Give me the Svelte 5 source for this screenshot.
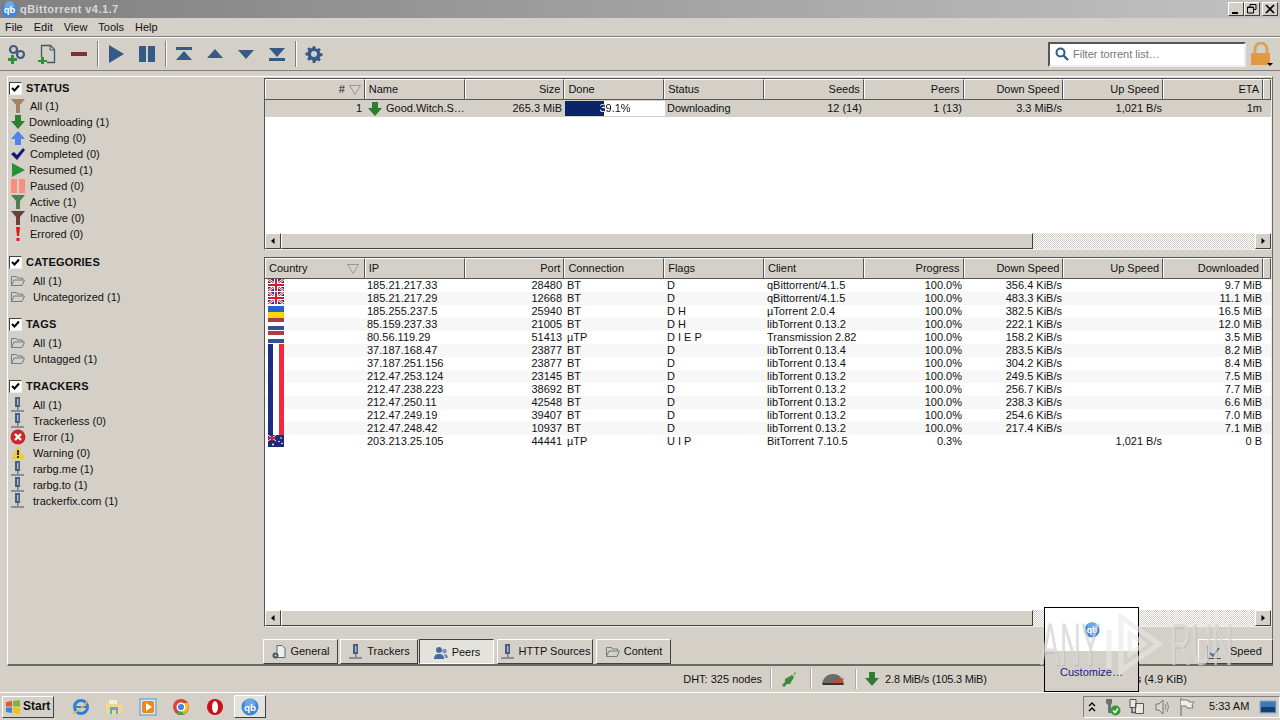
<script>
	const statusRows = [
		['funnel-brown', 'All (1)', 30],
		['down', 'Downloading (1)', 29],
		['up', 'Seeding (0)', 29],
		['check', 'Completed (0)', 30],
		['play-green', 'Resumed (1)', 29],
		['pause-pink', 'Paused (0)', 30],
		['funnel-green', 'Active (1)', 30],
		['funnel-dark', 'Inactive (0)', 30],
		['bang', 'Errored (0)', 30],
	]
	const sections = [
		{ title: 'CATEGORIES', rows: [['folder', 'All (1)', 33], ['folder', 'Uncategorized (1)', 33]] },
		{ title: 'TAGS', rows: [['folder', 'All (1)', 33], ['folder', 'Untagged (1)', 33]] },
		{
			title: 'TRACKERS',
			rows: [
				['tracker', 'All (1)', 33],
				['tracker', 'Trackerless (0)', 33],
				['error', 'Error (1)', 33],
				['warning', 'Warning (0)', 33],
				['tracker', 'rarbg.me (1)', 33],
				['tracker', 'rarbg.to (1)', 33],
				['tracker', 'trackerfix.com (1)', 33],
			],
		},
	]

	const torrentCols = [
		['#', 'r', true], ['Name', 'l'], ['Size', 'r'], ['Done', 'l'], ['Status', 'l'],
		['Seeds', 'r'], ['Peers', 'r'], ['Down Speed', 'r'], ['Up Speed', 'r'], ['ETA', 'r'],
	]
	const peerCols = [
		['Country', 'l', true], ['IP', 'l'], ['Port', 'r'], ['Connection', 'l'], ['Flags', 'l'],
		['Client', 'l'], ['Progress', 'r'], ['Down Speed', 'r'], ['Up Speed', 'r'], ['Downloaded', 'r'],
	]
	const peers = [
		['gb', '185.21.217.33', '28480', 'BT', 'D', 'qBittorrent/4.1.5', '100.0%', '356.4 KiB/s', '', '9.7 MiB'],
		['gb', '185.21.217.29', '12668', 'BT', 'D', 'qBittorrent/4.1.5', '100.0%', '483.3 KiB/s', '', '11.1 MiB'],
		['ua', '185.255.237.5', '25940', 'BT', 'D H', 'µTorrent 2.0.4', '100.0%', '382.5 KiB/s', '', '16.5 MiB'],
		['nl', '85.159.237.33', '21005', 'BT', 'D H', 'libTorrent 0.13.2', '100.0%', '222.1 KiB/s', '', '12.0 MiB'],
		['nl', '80.56.119.29', '51413', 'µTP', 'D I E P', 'Transmission 2.82', '100.0%', '158.2 KiB/s', '', '3.5 MiB'],
		['fr', '37.187.168.47', '23877', 'BT', 'D', 'libTorrent 0.13.4', '100.0%', '283.5 KiB/s', '', '8.2 MiB'],
		['fr', '37.187.251.156', '23877', 'BT', 'D', 'libTorrent 0.13.4', '100.0%', '304.2 KiB/s', '', '8.4 MiB'],
		['fr', '212.47.253.124', '23145', 'BT', 'D', 'libTorrent 0.13.2', '100.0%', '249.5 KiB/s', '', '7.5 MiB'],
		['fr', '212.47.238.223', '38692', 'BT', 'D', 'libTorrent 0.13.2', '100.0%', '256.7 KiB/s', '', '7.7 MiB'],
		['fr', '212.47.250.11', '42548', 'BT', 'D', 'libTorrent 0.13.2', '100.0%', '238.3 KiB/s', '', '6.6 MiB'],
		['fr', '212.47.249.19', '39407', 'BT', 'D', 'libTorrent 0.13.2', '100.0%', '254.6 KiB/s', '', '7.0 MiB'],
		['fr', '212.47.248.42', '10937', 'BT', 'D', 'libTorrent 0.13.2', '100.0%', '217.4 KiB/s', '', '7.1 MiB'],
		['au', '203.213.25.105', '44441', 'µTP', 'U I P', 'BitTorrent 7.10.5', '0.3%', '', '1,021 B/s', '0 B'],
	]
	const rightCols = [2, 6, 7, 8, 9]
	const tabs = [
		['file', 'General', 75, 2],
		['tracker', 'Trackers', 78, 1],
		['people', 'Peers', 75, 3],
		['globe', 'HTTP Sources', 96, 3],
		['folder', 'Content', 75, 0],
	]
</script>

{#snippet icon(name)}
	<svg class="ico" viewBox="0 0 16 16" width="16" height="16">
		{#if name === 'funnel-brown' || name === 'funnel-green' || name === 'funnel-dark'}
			{@const c = name === 'funnel-brown' ? '#a08468' : name === 'funnel-green' ? '#4f7f4f' : '#6b3f3a'}
			<path d="M1 1h14l-5 6v8H6V7z" fill={c} />
		{:else if name === 'down'}
			<path d="M5 1h6v6h4l-7 8-7-8h4z" fill="#2e7d32" />
		{:else if name === 'up'}
			<path d="M5 15h6V9h4L8 1 1 9h4z" fill="#4d86e8" />
		{:else if name === 'check'}
			<path d="M1 8l3-2 3 3 6-7 2 2-8 10z" fill="#16167a" />
		{:else if name === 'play-green'}
			<path d="M2 1l13 7-13 7z" fill="#2a9133" />
		{:else if name === 'pause-pink'}
			<path d="M1 1h6v14H1zM9 1h6v14H9z" fill="#f98d80" />
		{:else if name === 'bang'}
			<path d="M6 1h4l-1 9H7zM6.500 12h3v3h-3z" fill="#ee1111" />
		{:else if name === 'folder'}
			<path d="M1.500 12.500V3.500h5l1 1.500h5v2M1.500 12.500l2.500-5.500h10.500l-2.500 5.500z" fill="none" stroke="#6f7f85" />
		{:else if name === 'tracker'}
			<path d="M5 0h5v10H5z" fill="#4a5f85" /><path d="M7 2h1.500v6H7z" fill="#a9b6c8" /><path d="M7 10h1.500v3H7z" fill="#7a7a7a" /><path d="M1 13h13v2H1z" fill="#8a8f98" />
		{:else if name === 'error'}
			<circle cx="8" cy="8" r="7.500" fill="#c9282d" /><path d="M5 5l6 6M11 5l-6 6" stroke="#fff" stroke-width="2.400" />
		{:else if name === 'warning'}
			<path d="M8 1l7 13H1z" fill="#f3c93c" /><path d="M7 5h2v5H7zM7 11h2v2H7z" fill="#333" />
		{:else if name === 'file'}
			<path d="M6 1.500h5l3 3v9H6z" fill="#eee" stroke="#5a6b78" /><circle cx="4.500" cy="11.500" r="3" fill="#4a5a68" /><circle cx="4.500" cy="11.500" r="1" fill="#d4d0c8" />
		{:else if name === 'people'}
			<circle cx="6" cy="5" r="3" fill="#4a6a96" /><path d="M1 14c0-4 2-5 5-5s5 1 5 5z" fill="#4a6a96" /><circle cx="11.500" cy="6" r="2.200" fill="#7b8fae" /><path d="M11 9c2.500 0 4 1 4 4h-3z" fill="#7b8fae" />
		{:else if name === 'globe'}
			<path d="M5 0h5v10H5z" fill="#4a5f85" /><path d="M7 2h1.500v6H7z" fill="#a9b6c8" /><path d="M7 10h1.500v3H7z" fill="#7a7a7a" /><path d="M1 13h13v2H1z" fill="#8a8f98" />
		{/if}
	</svg>
{/snippet}

{#snippet flag(code)}
	<svg class="flag" viewBox="0 0 16 13" width="16" height="13" preserveAspectRatio="none">
		{#if code === 'gb'}
			<rect width="16" height="12" fill="#27347f" />
			<path d="M0 0l16 12M16 0L0 12" stroke="#fff" stroke-width="2.500" />
			<path d="M0 0l16 12M16 0L0 12" stroke="#d22" stroke-width="1" />
			<path d="M8 0v12M0 6h16" stroke="#fff" stroke-width="4" />
			<path d="M8 0v12M0 6h16" stroke="#d8182c" stroke-width="2" />
		{:else if code === 'ua'}
			<rect width="16" height="6" y="1" fill="#1e66cc" /><rect width="16" height="6" y="7" fill="#ffd60a" />
		{:else if code === 'nl'}
			<rect width="16" height="4" fill="#ae3b45" /><rect width="16" height="4" y="4" fill="#fff" /><rect width="16" height="4" y="8" fill="#34528f" />
		{:else if code === 'fr'}
			<rect width="5" height="13" fill="#1b2f7d" /><rect width="6" height="13" x="5" fill="#fff" /><rect width="5" height="13" x="11" fill="#ef2b3c" />
		{:else if code === 'au'}
			<rect width="16" height="12" fill="#1c2a78" /><path d="M0 0l8 6M8 0L0 6" stroke="#fff" /><path d="M4 0v6M0 3h8" stroke="#d8182c" stroke-width="1.500" /><circle cx="5" cy="9.500" r="1" fill="#fff" /><circle cx="13" cy="3" r=".8" fill="#fff" /><circle cx="14" cy="8.500" r=".8" fill="#fff" /><circle cx="11" cy="6.500" r=".8" fill="#fff" />
		{/if}
	</svg>
{/snippet}

{#snippet qblogo(size)}
	<svg viewBox="0 0 20 20" width={size} height={size}>
		<circle cx="10" cy="10" r="9.500" fill="#3f86d8" />
		<circle cx="10" cy="6" r="6" fill="#8dbcec" opacity=".6" />
		<text x="10" y="14" text-anchor="middle" class="qb-mark">qb</text>
	</svg>
{/snippet}

{#snippet scrollbar()}
	<div class="scrollbar">
		<div class="sb-btn"><svg viewBox="0 0 8 8" width="8" height="8"><path d="M5.500 1v6L2 4z" fill="#000" /></svg></div>
		<div class="sb-track"><div class="sb-thumb"></div></div>
		<div class="sb-btn"><svg viewBox="0 0 8 8" width="8" height="8"><path d="M2.500 1v6L6 4z" fill="#000" /></svg></div>
	</div>
{/snippet}

{#snippet header(cols)}
	<div class="thead">
		{#each cols as [label, align, sorted]}
			<div class="th" class:right={align === 'r'}>
				<span>{label}</span>
				{#if sorted}
					<svg class="sort" class:sort-l={align === 'l'} viewBox="0 0 12 10" width="12" height="10"><path d="M.500 .500h11L6 9.500z" fill="none" stroke="#9a968e" /></svg>
				{/if}
			</div>
		{/each}
		<div class="th th-tail"></div>
	</div>
{/snippet}

{#snippet checkbox()}
	<span class="cb"><svg viewBox="0 0 11 11" width="11" height="11"><path d="M2 5l2.500 2.500L9 2.500" fill="none" stroke="#000" stroke-width="2" /></svg></span>
{/snippet}

<div class="window">
	<div class="titlebar">
		<span class="title-logo">{@render qblogo(17)}</span>
		<span class="title-text">qBittorrent v4.1.7</span>
		<div class="win-btns">
			<button class="win-btn"><svg viewBox="0 0 10 10" width="10" height="10"><path d="M1 8h6v2H1z" fill="#000" /></svg></button>
			<button class="win-btn"><svg viewBox="0 0 10 10" width="10" height="10"><path d="M3 .500h6v5H7M3 .500v2M.500 3h6v6h-6zM.500 3.500h6" fill="none" stroke="#000" /></svg></button>
			<button class="win-btn close"><svg viewBox="0 0 10 10" width="10" height="10"><path d="M1 1l8 8M9 1L1 9" stroke="#000" stroke-width="1.600" /></svg></button>
		</div>
	</div>

	<nav class="menubar">
		<span>File</span><span>Edit</span><span>View</span><span>Tools</span><span>Help</span>
	</nav>

	<div class="toolbar">
		<div class="tool"><svg viewBox="0 0 20 20" width="20" height="20"><circle cx="6.500" cy="5.500" r="3.500" fill="none" stroke="#3d5a80" stroke-width="2.200" /><circle cx="13.500" cy="10.500" r="3.500" fill="none" stroke="#3d5a80" stroke-width="2.200" /><path d="M4 11h3v3h3v3H7v3H4v-3H1v-3h3z" fill="#2f8f3a" /></svg></div>
		<div class="tool"><svg viewBox="0 0 20 20" width="20" height="20"><path d="M3.500 13V1.500h9l4 4v13H9" fill="none" stroke="#3d5a68" stroke-width="1.300" /><path d="M12 2v4h4" fill="none" stroke="#3d5a68" /><path d="M3 13h3v3h3v2H6v2H3v-2H0v-2h3z" fill="#2f8f3a" /></svg></div>
		<div class="tool"><svg viewBox="0 0 20 20" width="20" height="20"><path d="M2 8h16v4H2z" fill="#7d2f3f" /></svg></div>
		<i class="tool-sep"></i>
		<div class="tool"><svg viewBox="0 0 20 20" width="20" height="20"><path d="M3 1l15 9-15 9z" fill="#345a87" /></svg></div>
		<div class="tool"><svg viewBox="0 0 20 20" width="20" height="20"><path d="M2 2h7v16H2zM11 2h7v16h-7z" fill="#345a87" /></svg></div>
		<i class="tool-sep"></i>
		<div class="tool"><svg viewBox="0 0 20 20" width="20" height="20"><path d="M2 3h16v3H2zM10 7l8 9H2z" fill="#345a87" /></svg></div>
		<div class="tool"><svg viewBox="0 0 20 20" width="20" height="20"><path d="M10 5l8 9H2z" fill="#345a87" /></svg></div>
		<div class="tool"><svg viewBox="0 0 20 20" width="20" height="20"><path d="M2 6h16l-8 9z" fill="#345a87" /></svg></div>
		<div class="tool"><svg viewBox="0 0 20 20" width="20" height="20"><path d="M2 4h16l-8 9zM2 14h16v3H2z" fill="#345a87" /></svg></div>
		<i class="tool-sep"></i>
		<div class="tool"><svg viewBox="0 0 20 20" width="20" height="20"><path d="M8.500 1h3l.5 2.500 1.700.7 2.200-1.400 2.100 2.100-1.400 2.200.7 1.700 2.700.5v3l-2.700.5-.7 1.700 1.400 2.200-2.100 2.100-2.200-1.400-1.700.7-.5 2.500h-3L8 17.300l-1.700-.7-2.200 1.400L2 15.900l1.400-2.200-.7-1.700L0 11.500v-3l2.700-.5.7-1.700L2 4.100 4.100 2l2.200 1.400L8 2.700z" transform="translate(1.500 1.500) scale(.85)" fill="#345a87" /><circle cx="10" cy="10" r="3" fill="#d4d0c8" /></svg></div>

		<div class="filter">
			<svg viewBox="0 0 14 14" width="14" height="14"><circle cx="5.500" cy="5.500" r="4" fill="none" stroke="#345a87" stroke-width="2" /><path d="M8.500 8.500l4.500 4.500" stroke="#345a87" stroke-width="2.400" /></svg>
			<span>Filter torrent list…</span>
		</div>
		<div class="lock">
			<svg viewBox="0 0 24 24" width="24" height="24"><path d="M6 11V7a6 6 0 0 1 12 0v4" fill="none" stroke="#d6a35c" stroke-width="3" /><path d="M2 11h19v12H2z" fill="#e39a3e" /><path d="M18 21h6l-3 3z" fill="#000" /></svg>
		</div>
	</div>

	<div class="main">
		<div class="frame">
			<aside class="sidebar">
				<section class="group">
					<div class="group-head">{@render checkbox()}<b>STATUS</b></div>
					{#each statusRows as [ic, label, x]}
						<div class="side-row">{@render icon(ic)}<span style="left:{x}px" class="side-label">{label}</span></div>
					{/each}
				</section>
				{#each sections as s}
					<section class="group">
						<div class="group-head">{@render checkbox()}<b>{s.title}</b></div>
						{#each s.rows as [ic, label, x]}
							<div class="side-row">{@render icon(ic)}<span style="left:{x}px" class="side-label">{label}</span></div>
						{/each}
					</section>
				{/each}
			</aside>

			<div class="content">
				<div class="panel torrents">
					{@render header(torrentCols)}
					<div class="rows">
						<div class="tr selected">
							<div class="td right">1</div>
							<div class="td name">{@render icon('down')}<span>Good.Witch.S…</span></div>
							<div class="td right">265.3 MiB</div>
							<div class="td progress">
								<div class="progress-fill" style="width:39.1%"></div>
								<span class="progress-text" style="--done:39.1%">39.1%</span>
							</div>
							<div class="td">Downloading</div>
							<div class="td right">12 (14)</div>
							<div class="td right">1 (13)</div>
							<div class="td right">3.3 MiB/s</div>
							<div class="td right">1,021 B/s</div>
							<div class="td right">1m</div>
						</div>
					</div>
					{@render scrollbar()}
				</div>

				<div class="panel peers">
					{@render header(peerCols)}
					<div class="rows">
						{#each peers as p, i}
							<div class="tr peer" class:alt={i % 2 === 1}>
								<div class="td flagcell">{@render flag(p[0])}</div>
								{#each p.slice(1) as v, j}
									<div class="td" class:right={rightCols.includes(j + 1)}>{v}</div>
								{/each}
							</div>
						{/each}
					</div>
					{@render scrollbar()}
				</div>

				<div class="tabs">
					{#each tabs as [ic, label, w, gap], i}
						<div class="tab" class:active={i === 2} style="width:{w}px;margin-right:{gap}px">{@render icon(ic)}<span>{label}</span></div>
					{/each}
					<div class="tab speed">
						<svg class="ico" viewBox="0 0 16 16" width="16" height="16"><path d="M1.500 1v13.500H15" fill="none" stroke="#555" /><path d="M4 9l3 3 6-8" fill="none" stroke="#4a6a96" stroke-width="1.800" /></svg>
						<span>Speed</span>
					</div>
				</div>
			</div>
		</div>
	</div>

	<div class="statusbar">
		<span>DHT: 325 nodes</span>
		<i class="st-sep"></i>
		<svg class="st-ico" viewBox="0 0 16 16" width="16" height="16"><path d="M14 1l1 1-3 3 1 1-4 7-3 0-3 3-2-2 3-3 0-3 7-4 1 1z" fill="#3f8a3a" /></svg>
		<i class="st-sep"></i>
		<svg class="st-ico speedo" viewBox="0 0 24 14" width="24" height="14"><path d="M1 13a11 11 0 0 1 22 0z" fill="#6f6a66" /><path d="M11 11L23 6l-3 6z" fill="#d8481e" /><path d="M2 11h20v2H2z" fill="#333" /></svg>
		<i class="st-sep"></i>
		<svg class="st-ico dl-ico" viewBox="0 0 16 16" width="16" height="16"><path d="M5 1h6v6h4l-7 8-7-8h4z" fill="#2e7d32" /></svg>
		<span class="dl">2.8 MiB/s (105.3 MiB)</span>
		<i class="st-sep"></i>
		<svg class="st-ico" viewBox="0 0 16 16" width="16" height="16"><path d="M5 15h6V9h4L8 1 1 9h4z" fill="#2e7d32" /></svg>
		<span class="ul">1,021 B/s (4.9 KiB)</span>
	</div>

	<div class="taskbar">
		<div class="start">
			<svg viewBox="0 0 16 16" width="16" height="16"><path d="M1 3l6-1v5.500H1z" fill="#e4572e" /><path d="M8 2l7-1v6.500H8z" fill="#7cb342" /><path d="M1 8.500h6V14l-6-1z" fill="#3a86d8" /><path d="M8 8.500h7V15l-7-1z" fill="#f4c20d" /></svg>
			<b>Start</b>
		</div>
		<div class="quick">
			<span class="q"><svg viewBox="0 0 18 18" width="18" height="18"><circle cx="9" cy="9" r="6.500" fill="none" stroke="#2f7fd8" stroke-width="3" /><path d="M3 9h12" stroke="#2f7fd8" stroke-width="2" /><path d="M1 15C4 15 14 7 16 2" fill="none" stroke="#e9b949" stroke-width="1.600" /></svg></span>
			<span class="q"><svg viewBox="0 0 18 18" width="18" height="18"><path d="M1 5h6l1 1.500h9V16H1z" fill="#f1d98a" /><path d="M4 2h8v4H4z" fill="#f7f0d0" /><path d="M5 9h8v7h-2v-4H7v4H5z" fill="#5fa5d8" /></svg></span>
			<span class="q"><svg viewBox="0 0 18 18" width="18" height="18"><rect x="1" y="1" width="16" height="16" fill="#d7e6f5" stroke="#5a92cc" /><rect x="3" y="3" width="12" height="12" rx="2" fill="#e98b1c" /><path d="M7 5l6 4-6 4z" fill="#fff" /></svg></span>
			<span class="q"><svg viewBox="0 0 18 18" width="18" height="18"><circle cx="9" cy="9" r="8" fill="#dc4437" /><path d="M9 9L16 13A8 8 0 0 1 5 16z" fill="#3aa757" /><path d="M9 5h7a8 8 0 0 1-5 11z" fill="#f4c20d" /><circle cx="9" cy="9" r="3.800" fill="#4a86e8" stroke="#fff" stroke-width="1.400" /></svg></span>
			<span class="q"><svg viewBox="0 0 18 18" width="18" height="18"><ellipse cx="9" cy="9" rx="8" ry="8" fill="#cc0f16" /><ellipse cx="9" cy="9" rx="3" ry="6" fill="#fff" /></svg></span>
		</div>
		<div class="task-btn">{@render qblogo(18)}</div>
		<div class="tray">
			<svg class="tray-arrow" viewBox="0 0 8 10" width="8" height="10"><path d="M1 4l3-3 3 3M1 9l3-3 3 3" fill="none" stroke="#000" stroke-width="1.300" /></svg>
			<svg viewBox="0 0 18 18" width="18" height="18"><path d="M3 1h6v4l-1 2v8H5V7L3 5z" fill="#6a7078" /><circle cx="12.500" cy="12.500" r="5" fill="#2f9b35" /><path d="M10 12.500l2 2 3-4" fill="none" stroke="#fff" stroke-width="1.500" /></svg>
			<svg viewBox="0 0 18 18" width="18" height="18"><path d="M2 1.500h6v8H2zM7.500 5.500h8v10h-8z" fill="#e8e8e0" stroke="#555" /><path d="M4 9.500v5h4" fill="none" stroke="#555" stroke-width="1.500" /></svg>
			<svg viewBox="0 0 18 18" width="18" height="18"><path d="M3 6h3l4-4v14l-4-4H3z" fill="#d8d8d0" stroke="#777" /><path d="M12 6q2 3 0 6M14 4q3 5 0 10" fill="none" stroke="#888" /></svg>
			<svg viewBox="0 0 18 18" width="18" height="18"><path d="M3 0v18" stroke="#666" /><path d="M3 2h7l1 2h5l-2 3 1 3H9L8 8H3" fill="#eee" stroke="#777" /></svg>
			<span class="clock">5:33 AM</span>
			<svg viewBox="0 0 18 18" width="18" height="18"><path d="M1 3h16v12H1z" fill="#3d79b8" stroke="#8ab" /><path d="M2 9h14v5H2z" fill="#15406e" /></svg>
		</div>
	</div>

	<div class="popup">
		<div class="popup-top">{@render qblogo(16)}</div>
		<div class="popup-bottom">Customize…</div>
	</div>
	<div class="watermark" aria-hidden="true">
		<span class="wm-word">ANY</span>
		<svg class="wm-mark" viewBox="0 0 60 64" width="60" height="64"><path d="M3 18v38M15 5v54l38-27z M24 22v20l14-10z" fill="none" stroke="currentColor" stroke-width="5" /></svg>
		<span class="wm-word">RUN</span>
	</div>
</div>

<style>
	:global(body) {
		margin: 0;
		background: #d4d0c8;
		overflow: hidden;
	}
	.window {
		width: 1280px;
		height: 720px;
		display: flex;
		flex-direction: column;
		position: relative;
		overflow: hidden;
		background: #d4d0c8;
		color: #111;
		font: 11px/13px Tahoma, "Liberation Sans", "Noto Sans", sans-serif;
	}

	.titlebar {
		height: 18px;
		display: flex;
		align-items: center;
		background: linear-gradient(90deg, #808080, #c2c2c2);
		flex: none;
	}
	.title-logo {
		display: flex;
		margin-left: 1px;
	}
	.title-text {
		margin-left: 2px;
		font-weight: 700;
		letter-spacing: .45px;
		color: #d8d8d8;
	}
	.qb-mark {
		font: 700 11px "Liberation Sans", sans-serif;
		fill: #fff;
	}
	.win-btns {
		margin-left: auto;
		display: flex;
		margin-right: 2px;
	}
	.win-btn {
		width: 16px;
		height: 14px;
		padding: 0;
		margin: 0;
		display: flex;
		align-items: center;
		justify-content: center;
		background: #d4d0c8;
		border: 1px solid;
		border-color: #fff #404040 #404040 #fff;
		box-sizing: border-box;
	}
	.win-btn.close {
		margin-left: 2px;
	}

	.menubar {
		height: 19px;
		display: flex;
		align-items: center;
		padding-left: 5px;
		gap: 11px;
		flex: none;
		box-sizing: border-box;
		border-bottom: 1px solid #808080;
	}

	.toolbar {
		height: 34px;
		display: flex;
		align-items: center;
		flex: none;
		padding: 0 2px 0 1px;
		box-sizing: border-box;
		border-top: 1px solid #fff;
		border-bottom: 1px solid #808080;
	}
	.tool {
		width: 31px;
		height: 24px;
		display: flex;
		align-items: center;
		justify-content: center;
	}
	.tool-sep {
		width: 1px;
		height: 26px;
		background: #808080;
		border-right: 1px solid #fff;
		margin: 0 1px 0 3px;
	}
	.filter {
		margin-left: auto;
		width: 198px;
		height: 25px;
		box-sizing: border-box;
		background: #fff;
		border: 2px solid;
		border-color: #555 #eee #eee #555;
		display: flex;
		align-items: center;
		gap: 4px;
		padding-left: 5px;
		color: #777;
	}
	.lock {
		width: 30px;
		margin-right: 2px;
		display: flex;
		justify-content: center;
	}

	.main {
		flex: 1;
		min-height: 0;
		padding: 5px 7px 0 7px;
		box-sizing: border-box;
		display: flex;
	}
	.frame {
		flex: 1;
		min-width: 0;
		display: flex;
		box-sizing: border-box;
		border: 1px solid;
		border-color: #fff #6a6a66 #6a6a66 #fff;
		border-bottom-width: 2px;
	}
	.sidebar {
		width: 256px;
		flex: none;
		padding-top: 1px;
	}
	.group {
		margin-bottom: 9px;
	}
	.group:first-child {
		margin-bottom: 10px;
	}
	.group + .group .group-head {
		margin-bottom: 1px;
	}
	.group-head {
		height: 20px;
		display: flex;
		align-items: center;
		padding-left: 1px;
		gap: 4px;
	}
	.group-head b {
		font-size: 11px;
		letter-spacing: .2px;
	}
	.cb {
		width: 11px;
		height: 11px;
		background: #fff;
		border: 1px solid;
		border-color: #444 #eee #eee #444;
		display: block;
	}
	.cb svg {
		display: block;
	}
	.side-row {
		height: 16px;
		position: relative;
		display: flex;
		align-items: center;
		padding-left: 2px;
	}
	.side-label {
		position: absolute;
		top: 2px;
		margin-left: -8px;
		white-space: nowrap;
	}
	.ico {
		display: block;
		flex: none;
	}

	.content {
		flex: 1;
		min-width: 0;
		display: flex;
		flex-direction: column;
	}
	.panel {
		background: #fff;
		border: 1px solid;
		border-color: #555 #eee #eee #555;
		display: flex;
		flex-direction: column;
		flex: none;
		box-sizing: border-box;
		width: 1008px;
		overflow: hidden;
	}
	.torrents {
		height: 172px;
		margin-top: 1px;
	}
	.peers {
		height: 370px;
		margin-top: 7px;
	}
	.thead {
		display: flex;
		height: 20px;
		flex: none;
		background: #d4d0c8;
		border-bottom: 1px solid #555;
	}
	.th {
		width: 100px;
		box-sizing: border-box;
		display: flex;
		align-items: center;
		padding: 0 3px;
		border-style: solid;
		border-width: 1px 1px 0 1px;
		border-color: #fff #555 #555 #fff;
		white-space: nowrap;
		position: relative;
	}
	.th.right {
		justify-content: flex-end;
	}
	.th-tail {
		width: 7px;
	}
	.sort {
		margin-left: 4px;
	}
	.sort-l {
		position: absolute;
		right: 5px;
	}
	.rows {
		flex: 1;
		min-height: 0;
		overflow: hidden;
	}
	.tr {
		display: flex;
		height: 17px;
		align-items: center;
	}
	.td {
		width: 100px;
		flex: none;
		box-sizing: border-box;
		padding: 0 3px 0 2px;
		white-space: nowrap;
		overflow: hidden;
	}
	.td.right {
		text-align: right;
	}
	.selected {
		background: #d4d0c8;
	}
	.name {
		display: flex;
		align-items: center;
		gap: 3px;
		padding-right: 0;
	}
	.progress {
		position: relative;
		height: 15px;
		background: #fff;
		padding: 0;
		line-height: 15px;
	}
	.progress-fill {
		position: absolute;
		left: 0;
		top: 0;
		bottom: 0;
		background: #0a246a;
	}
	.progress-text {
		position: relative;
		display: block;
		text-align: center;
		color: transparent;
		background: linear-gradient(90deg, #fff var(--done), #111 0);
		-webkit-background-clip: text;
		background-clip: text;
	}
	.peer {
		height: 13px;
	}
	.alt {
		background: #f7f7f7;
	}
	.flagcell {
		padding: 0 0 0 3px;
	}
	.flag {
		display: block;
	}

	.scrollbar {
		height: 16px;
		flex: none;
		display: flex;
	}
	.sb-btn {
		width: 16px;
		box-sizing: border-box;
		background: #d4d0c8;
		border: 1px solid;
		border-color: #fff #404040 #404040 #fff;
		display: flex;
		align-items: center;
		justify-content: center;
	}
	.sb-track {
		flex: 1;
		background: repeating-conic-gradient(#fff 0 25%, #d4d0c8 0 50%) 0 0 / 2px 2px;
	}
	.sb-thumb {
		width: 752px;
		height: 100%;
		box-sizing: border-box;
		background: #d4d0c8;
		border: 1px solid;
		border-color: #fff #404040 #404040 #fff;
	}

	.tabs {
		display: flex;
		align-items: flex-end;
		flex: none;
		margin: 12px -1px 0 -1px;
		height: 25px;
	}
	.tab {
		height: 25px;
		box-sizing: border-box;
		display: flex;
		align-items: center;
		justify-content: center;
		gap: 3px;
		border: 1px solid;
		border-color: #fff #404040 #404040 #fff;
	}
	.tab.active {
		border-color: #404040 #fff #fff #404040;
		background: #e4e2dc;
		padding-top: 2px;
	}
	.tab.speed {
		margin-left: auto;
		width: 75px;
		gap: 8px;
		padding-left: 7px;
		justify-content: flex-start;
	}

	.statusbar {
		height: 27px;
		flex: none;
		display: flex;
		align-items: center;
		justify-content: flex-end;
		padding-right: 93px;
		box-sizing: border-box;
		border-bottom: 1px solid #fff;
	}
	.st-sep {
		width: 1px;
		height: 20px;
		background: #aaa;
		border-right: 1px solid #fff;
		margin: 0 9px 0 8px;
	}
	.st-ico {
		display: block;
		margin-right: 5px;
	}
	.speedo {
		margin: 0 2px 0 0;
	}
	.dl-ico {
		margin-left: -2px;
	}
	.dl {
		letter-spacing: -.2px;
		margin-right: 68px;
	}

	.taskbar {
		height: 27px;
		flex: none;
		display: flex;
		align-items: center;
		box-sizing: border-box;
		padding-left: 2px;
	}
	.start {
		width: 52px;
		height: 22px;
		box-sizing: border-box;
		display: flex;
		align-items: center;
		gap: 2px;
		padding-left: 2px;
		border: 1px solid;
		border-color: #fff #404040 #404040 #fff;
	}
	.start b {
		font-size: 12px;
	}
	.quick {
		display: flex;
		margin-left: 10px;
	}
	.q {
		width: 33.500px;
		display: flex;
		justify-content: center;
	}
	.task-btn {
		width: 32px;
		height: 23px;
		box-sizing: border-box;
		margin-left: 2px;
		display: flex;
		align-items: center;
		justify-content: center;
		border: 1px solid;
		border-color: #fff #404040 #404040 #fff;
		background: #e4e2dc;
	}
	.tray {
		margin-left: auto;
		width: 197px;
		height: 22px;
		box-sizing: border-box;
		display: flex;
		align-items: center;
		border: 1px solid;
		border-color: #808080 #fff #fff #808080;
		padding-left: 4px;
		gap: 7px;
	}
	.clock {
		margin-left: 6px;
		white-space: nowrap;
		width: 43px;
	}

	.popup {
		position: absolute;
		left: 1044px;
		top: 607px;
		width: 95px;
		height: 85px;
		box-sizing: border-box;
		border: 1px solid #000;
		display: flex;
		flex-direction: column;
	}
	.popup-top {
		height: 43px;
		background: #fff;
		display: flex;
		justify-content: center;
		padding-top: 14px;
		box-sizing: border-box;
		flex: none;
	}
	.popup-bottom {
		flex: 1;
		background: #d4d0c8;
		color: #1a1a8c;
		text-align: center;
		padding-top: 15px;
	}
	.watermark {
		position: absolute;
		left: 1040px;
		top: 612px;
		height: 64px;
		display: flex;
		align-items: center;
		gap: 4px;
		color: rgba(232, 232, 232, .6);
		text-shadow: 1px 1px 0 rgba(130, 130, 130, .35);
	}
	.wm-word {
		width: 62px;
		font: 62px/64px "Liberation Sans", sans-serif;
		transform: scaleX(.47);
		transform-origin: left center;
		white-space: nowrap;
	}
	.wm-mark {
		display: block;
		flex: none;
	}
</style>
